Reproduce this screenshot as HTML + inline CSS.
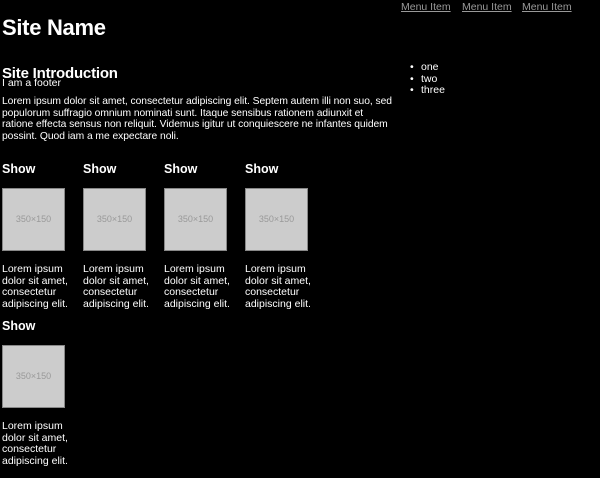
<!DOCTYPE html>
<html><head><meta charset="utf-8"><style>
*{margin:0;padding:0}
body{width:600px;height:478px;background:#000;color:#fff;font-family:"Liberation Sans",Arial,sans-serif;font-size:10.5px;line-height:11.7px;position:relative;overflow:hidden}
.a{position:absolute;white-space:nowrap}
.menu a{position:absolute;top:2px;color:#999;text-decoration:underline;font-size:10.5px}
h1{position:absolute;left:2px;top:14px;font-size:22px;line-height:28px;font-weight:bold;letter-spacing:-0.3px}
h2{position:absolute;left:2px;top:65px;font-size:15px;line-height:18px;font-weight:bold;letter-spacing:-0.2px}
.p{position:absolute;left:2px;top:96px;white-space:nowrap;font-size:10.3px;letter-spacing:-0.05px}
ul{position:absolute;left:408px;top:62px;list-style:none}
ul li:before{content:"•";position:absolute;left:2px}
ul li{padding-left:13px}
.c{position:absolute;width:75px}
.c b{display:block;font-size:12.5px;line-height:15px}
.img{position:absolute;left:0;top:26px;width:61px;height:61px;background:#ccc;border:1px solid #888;color:#999;font-size:9px;text-align:center;line-height:61px;font-family:"Liberation Sans Narrow","Liberation Sans",sans-serif}
.t{position:absolute;left:0;top:102px;white-space:normal;width:75px}
</style></head><body>
<div class="menu"><a style="left:401px">Menu Item</a><a style="left:462px">Menu Item</a><a style="left:522px">Menu Item</a></div>
<h1>Site Name</h1>
<h2>Site Introduction</h2>
<div class="a" style="left:2px;top:78px">I am a footer</div>
<div class="p">Lorem ipsum dolor sit amet, consectetur adipiscing elit. Septem autem illi non suo, sed<br>populorum suffragio omnium nominati sunt. Itaque sensibus rationem adiunxit et<br>ratione effecta sensus non reliquit. Videmus igitur ut conquiescere ne infantes quidem<br>possint. Quod iam a me expectare noli.</div>
<ul><li>one</li><li>two</li><li>three</li></ul>
<div class="c" style="left:2px;top:162px"><b>Show</b><div class="img">350×150</div><div class="t">Lorem ipsum dolor sit amet, consectetur adipiscing elit.</div></div>
<div class="c" style="left:83px;top:162px"><b>Show</b><div class="img">350×150</div><div class="t">Lorem ipsum dolor sit amet, consectetur adipiscing elit.</div></div>
<div class="c" style="left:164px;top:162px"><b>Show</b><div class="img">350×150</div><div class="t">Lorem ipsum dolor sit amet, consectetur adipiscing elit.</div></div>
<div class="c" style="left:245px;top:162px"><b>Show</b><div class="img">350×150</div><div class="t">Lorem ipsum dolor sit amet, consectetur adipiscing elit.</div></div>
<div class="c" style="left:2px;top:319px"><b>Show</b><div class="img">350×150</div><div class="t">Lorem ipsum dolor sit amet, consectetur adipiscing elit.</div></div>
</body></html>
